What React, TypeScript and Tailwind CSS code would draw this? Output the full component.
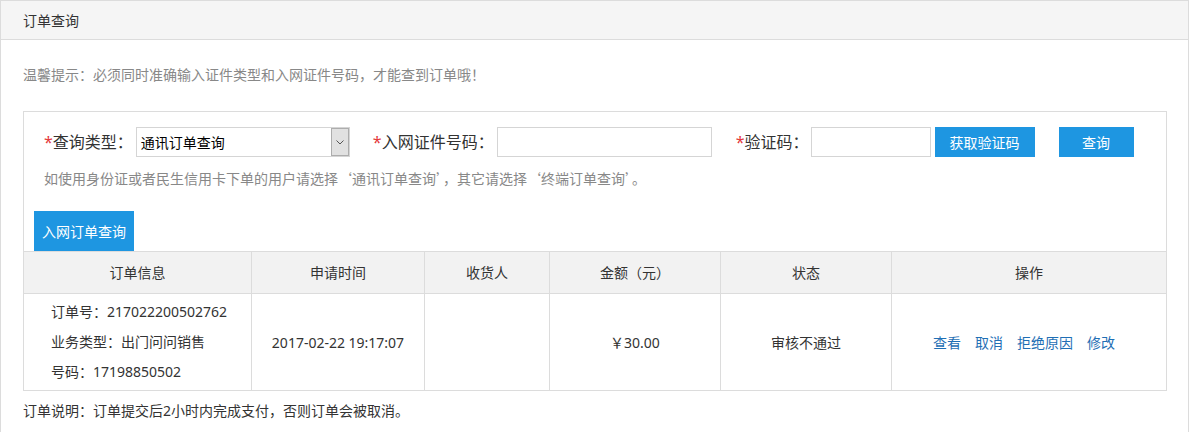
const font = {
  fontFamily: '"Noto Sans", "Noto Sans CJK SC", sans-serif',
};

function Label({ text, className = "" }: { text: string; className?: string }) {
  return (
    <span className={`text-[16px] text-[#333] whitespace-nowrap ${className}`}>
      <span className="text-[#e4393c]">*</span>
      {text}：
    </span>
  );
}

function Q({ children }: { children: string }) {
  return <span className="font-['Noto_Sans_CJK_SC']">{children}</span>;
}

const headers = ["订单信息", "申请时间", "收货人", "金额（元）", "状态", "操作"];

export default function App() {
  return (
    <div className="min-h-[432px] bg-white" style={font}>
      <div className="w-[1189px] border border-[#dcdcdc]">
        <div className="h-[39px] bg-[#f5f5f5] border-b border-[#dcdcdc] flex items-center pl-[22px] text-[14px] text-[#333]">
          订单查询
        </div>

        <div className="pl-[22px] pt-[25px]">
          <p className="h-[20px] leading-[20px] text-[14px] text-[#888]">
            温馨提示：必须同时准确输入证件类型和入网证件号码，才能查到订单哦！
          </p>

          <div className="mt-[26px] w-[1144px] border border-[#dcdcdc]">
            <div className="pt-[15px] pl-[20px]">
              <div className="flex items-center h-[30px]">
                <Label text="查询类型" />
                <div className="ml-[3px] w-[214px] h-[30px] border border-[#d5d5d5] flex items-center">
                  <span className="flex-1 pl-[4px] text-[14px] text-black">通讯订单查询</span>
                  <div className="w-[18px] h-[28px] bg-[#e1e1e1] border border-[#adadad] flex items-center justify-center">
                    <svg width="8" height="5" viewBox="0 0 8 5" fill="none">
                      <path d="M0.5 0.5 L4 4 L7.5 0.5" stroke="#555" strokeWidth="1" />
                    </svg>
                  </div>
                </div>

                <Label text="入网证件号码" className="ml-[23px]" />
                <div className="ml-[3px] w-[215px] h-[30px] border border-[#d5d5d5]" />

                <Label text="验证码" className="ml-[24px]" />
                <div className="ml-[2px] w-[120px] h-[30px] border border-[#d5d5d5]" />

                <button className="ml-[4px] w-[100px] h-[30px] bg-[#1e96e1] text-white text-[14px]">
                  获取验证码
                </button>
                <button className="ml-[24px] w-[75px] h-[30px] bg-[#1e96e1] text-white text-[14px]">
                  查询
                </button>
              </div>

              <p className="mt-[11px] h-[20px] leading-[20px] text-[14px] text-[#888]">
                如使用身份证或者民生信用卡下单的用户请选择<Q>‘</Q>通讯订单查询<Q>’</Q>，其它请选择
                <Q>‘</Q>终端订单查询<Q>’</Q>。
              </p>

              <div className="mt-[23px] -ml-[10px]">
                <div className="w-[100px] h-[40px] bg-[#1e96e1] text-white text-[14px] flex items-center justify-center">
                  入网订单查询
                </div>
              </div>
            </div>

            <div className="grid grid-cols-[227px_173px_125px_171px_171px_1fr] border-t border-[#dcdcdc] text-[14px] text-[#333]">
              {headers.map((h, i) => (
                <div
                  key={h}
                  className={`h-[42px] bg-[#f2f2f2] border-b border-[#dcdcdc] flex items-center justify-center ${
                    i > 0 ? "border-l" : ""
                  }`}
                >
                  {h}
                </div>
              ))}

              <div className="h-[96px] flex flex-col justify-center pl-[27px] gap-[10px] leading-[20px]">
                <span>订单号：217022200502762</span>
                <span>业务类型：出门问问销售</span>
                <span>号码：17198850502</span>
              </div>
              <div className="border-l border-[#dcdcdc] flex items-center justify-center">
                2017-02-22 19:17:07
              </div>
              <div className="border-l border-[#dcdcdc]" />
              <div className="border-l border-[#dcdcdc] flex items-center justify-center">
                ￥30.00
              </div>
              <div className="border-l border-[#dcdcdc] flex items-center justify-center">
                审核不通过
              </div>
              <div className="border-l border-[#dcdcdc] flex items-center justify-center gap-[14px] pr-[10px] text-[#1f6fb5]">
                <a>查看</a>
                <a>取消</a>
                <a>拒绝原因</a>
                <a>修改</a>
              </div>
            </div>
          </div>

          <p className="mt-[10px] h-[20px] leading-[20px] text-[14px] text-[#333]">
            订单说明：订单提交后2小时内完成支付，否则订单会被取消。
          </p>
          <div className="h-[20px]" />
        </div>
      </div>
    </div>
  );
}
